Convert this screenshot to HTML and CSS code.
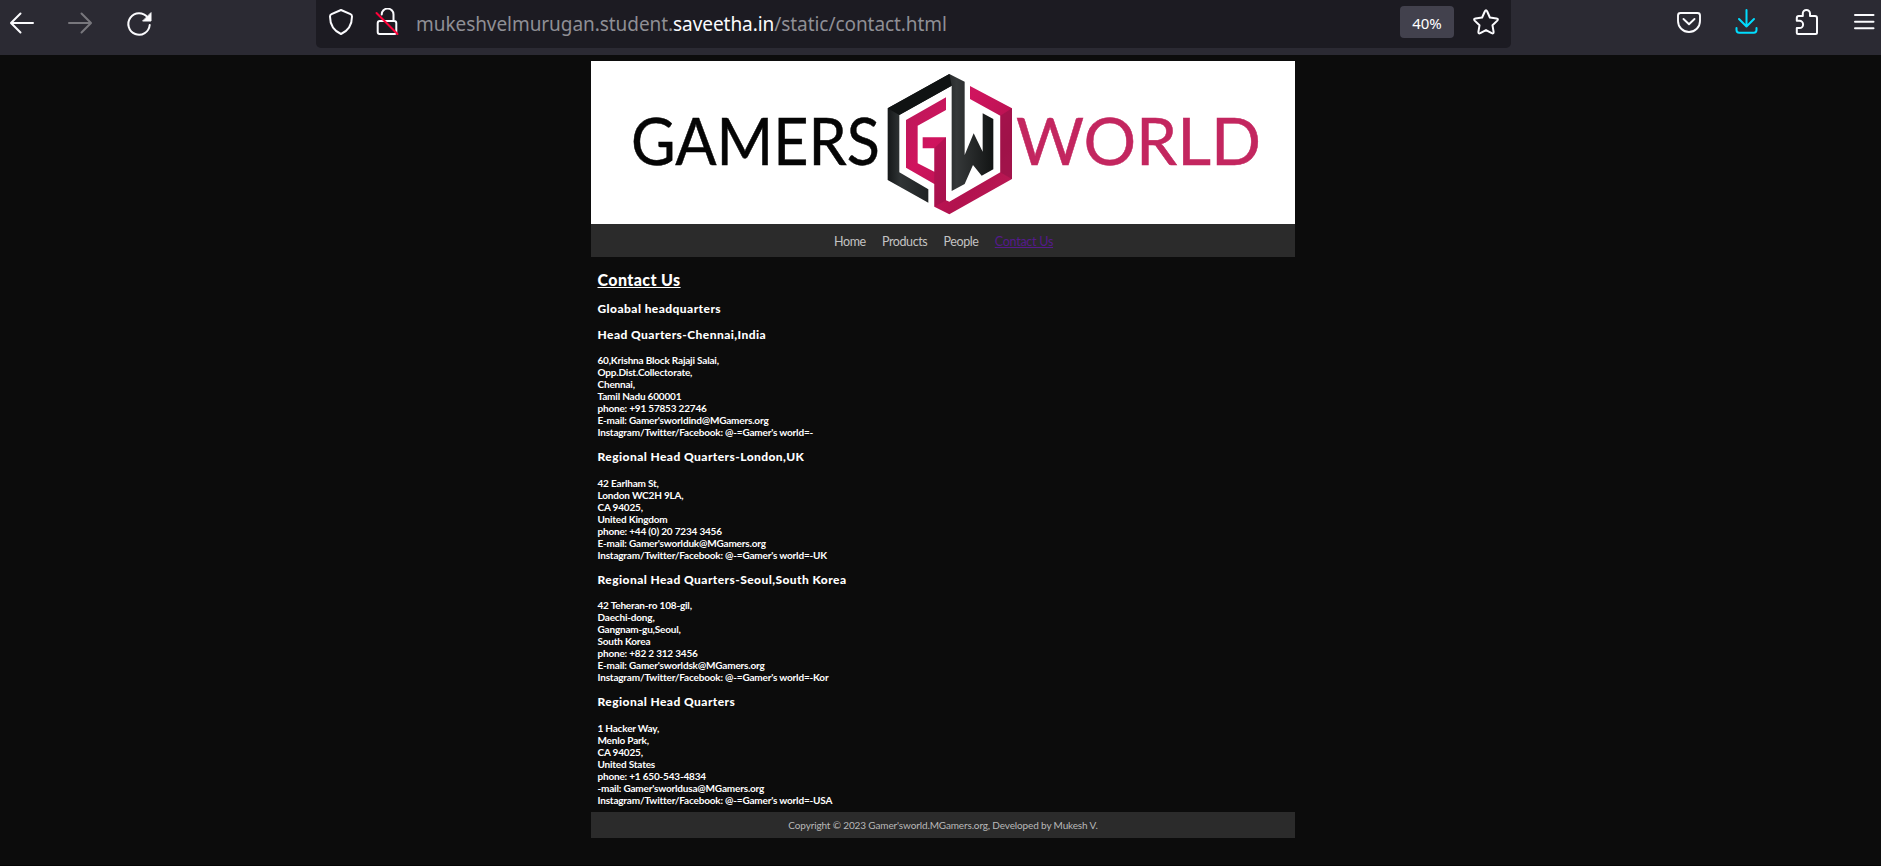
FILE: index.html
```html
<!DOCTYPE html>
<html lang="en">
<head>
<meta charset="utf-8">
<title>Contact Us</title>
<link rel="stylesheet" href="styles.css">
</head>
<body>
<header class="toolbar">
  <svg class="icon back" viewBox="7 8 30 30"><path d="M33 23H11.5M20.5 13.5L11 23l9.500 9.500"/></svg>
  <svg class="icon forward" viewBox="65 8 30 30"><path d="M69 23h21.500M81.500 13.500L91 23l-9.500 9.500"/></svg>
  <svg class="icon reload" viewBox="124 8 30 30"><path d="M147.500 17.500A10.700 10.700 0 1 0 149.700 25"/><path class="solid" d="M151 13v8h-8z"/></svg>
  <div class="urlbar">
    <svg class="icon shield" viewBox="326 8 30 30"><path d="M341 10l9.500 4.200q1.500.7 1.500 2.200c0 8-3.500 14-11 17.600-7.500-3.600-11-9.600-11-17.600q0-1.500 1.500-2.200z"/></svg>
    <svg class="icon lock" viewBox="372 8 30 30"><path d="M381.700 14.500a5.900 5.900 0 0 1 11.800 0V21M380 21h14q2.300 0 2.300 2.300V32q0 2-2 2h-14.600q-2 0-2-2v-8.700q0-2.300 2.300-2.300z"/><path class="slash" d="M376.500 13L397.500 34"/></svg>
    <div class="url"><span class="sub">mukeshvelmurugan.student.</span><span class="domain">saveetha.in</span><span class="path">/static/contact.html</span></div>
    <div class="zoom">40%</div>
    <svg class="icon star" viewBox="1471 8 30 30"><path d="M1484.800 11.500q1.200-2.300 2.400 0l2.700 6 6.600.9q2.300.5.800 2.200l-4.800 4.700 1.100 6.500q.1 2.300-1.900 1.400l-5.700-3.100-5.700 3.100q-2 .9-1.900-1.400l1.100-6.500-4.800-4.700q-1.500-1.700.8-2.200l6.600-.9z"/></svg>
  </div>
  <svg class="icon pocket" viewBox="1674 8 30 30"><path d="M1680.500 13h17q2.500 0 2.500 2.500V21a11 11 0 0 1-22 0v-5.500q0-2.500 2.500-2.500zM1683.500 19l5.500 5.300 5.500-5.300"/></svg>
  <svg class="icon download" viewBox="1731 8 30 30"><path d="M1746.500 10v16.500M1739 19l7.500 7.500 7.500-7.500M1736.500 28v2q0 2.700 2.700 2.700h14.600q2.700 0 2.700-2.700v-2"/></svg>
  <svg class="icon puzzle" viewBox="1792 8 30 30"><path d="M1798 34q-1.200 0-1.200-1.200V28h2.700a3.600 3.600 0 0 0 0-7.200h-2.700V18q0-2 2-2h4v-2.500a3.600 3.600 0 0 1 7.200 0V16h5q2 0 2 2v14.500q0 1.500-1.500 1.500z"/></svg>
  <svg class="icon menu" viewBox="1849 8 30 30"><path d="M1855 15h18.500M1855 21.700h18.500M1855 28.300h18.500"/></svg>
</header>

<main class="page">
  <svg class="banner" viewBox="591 61 704 163">
    <defs>
      <linearGradient id="ink" x1="0" y1="0" x2="1" y2="0"><stop offset="0" stop-color="#151819"/><stop offset=".12" stop-color="#303435"/><stop offset=".5" stop-color="#181b1c"/><stop offset=".65" stop-color="#353839"/><stop offset="1" stop-color="#121414"/></linearGradient>
      <linearGradient id="rose" x1="0" y1="0" x2="1" y2="1"><stop offset="0" stop-color="#b51a58"/><stop offset=".35" stop-color="#d0145e"/><stop offset=".7" stop-color="#b2124e"/><stop offset="1" stop-color="#bf1c58"/></linearGradient>
    </defs>
    <text class="brand" x="631" y="164.500" textLength="249" lengthAdjust="spacingAndGlyphs">GAMERS</text>
    <text class="brand brand-rose" x="1016" y="164.500" textLength="245" lengthAdjust="spacingAndGlyphs">WORLD</text>
    <g transform="translate(860 55) scale(.33333)">
      <path fill="url(#ink)" d="M268 57L83 160V375L205 443V403L118 352V180L275 92V408L314 387L339 330L365 362L400 343V192L368 175V290L341 235L314 300V80z"/>
      <path fill="url(#rose)" d="M258 127L138 195V338L223 387V455L268 478L456 372V160L330 93V132L421 182V352L268 440L258 436V247H188V280H223V350L173 325V212L258 165z"/>
      <path fill="#101313" d="M83 160L118 180L275 92L268 57z"/>
      <path fill="#8f1245" d="M421 182L456 160V372L421 352z" opacity=".55"/>
      <path fill="#8f1245" d="M223 280L258 247V436L223 455z" opacity=".4"/>
    </g>
  </svg>
  <nav class="nav"><a>Home</a><a>Products</a><a>People</a><a class="current">Contact Us</a></nav>

  <div class="content">
    <h1>Contact Us</h1>
    <h2 class="global">Gloabal headquarters</h2>
    <section>
      <h2>Head Quarters-Chennai,India</h2>
      <p>60,Krishna Block Rajaji Salai,<br>Opp.Dist.Collectorate,<br>Chennai,<br>Tamil Nadu 600001<br>phone: +91 57853 22746<br>E-mail: Gamer'sworldind@MGamers.org<br>Instagram/Twitter/Facebook: @-=Gamer's world=-</p>
    </section>
    <section>
      <h2>Regional Head Quarters-London,UK</h2>
      <p>42 Earlham St,<br>London WC2H 9LA,<br>CA 94025,<br>United Kingdom<br>phone: +44 (0) 20 7234 3456<br>E-mail: Gamer'sworlduk@MGamers.org<br>Instagram/Twitter/Facebook: @-=Gamer's world=-UK</p>
    </section>
    <section>
      <h2>Regional Head Quarters-Seoul,South Korea</h2>
      <p>42 Teheran-ro 108-gil,<br>Daechi-dong,<br>Gangnam-gu,Seoul,<br>South Korea<br>phone: +82 2 312 3456<br>E-mail: Gamer'sworldsk@MGamers.org<br>Instagram/Twitter/Facebook: @-=Gamer's world=-Kor</p>
    </section>
    <section>
      <h2>Regional Head Quarters</h2>
      <p>1 Hacker Way,<br>Menlo Park,<br>CA 94025,<br>United States<br>phone: +1 650-543-4834<br>-mail: Gamer'sworldusa@MGamers.org<br>Instagram/Twitter/Facebook: @-=Gamer's world=-USA</p>
    </section>
  </div>
  <footer class="footer">Copyright © 2023 Gamer'sworld.MGamers.org, Developed by Mukesh V.</footer>
</main>
</body>
</html>
```

FILE: styles.css
```css
* { box-sizing: border-box; }
body { margin: 0; height: 866px; overflow: hidden; background: #0c0c0c; color: #fff; font-family: Lato, sans-serif; border-bottom: 1px solid #050505; }

.toolbar { display: flex; height: 55px; background: #2b2a33; padding-left: 7px; }
.icon { flex: none; width: 30px; height: 30px; margin-top: 8px; fill: none; stroke: #fbfbfe; stroke-width: 2; stroke-linecap: round; stroke-linejoin: round; }
.solid { fill: #fbfbfe; stroke-width: 1; }
.forward { margin-left: 28px; stroke: #78777d; }
.reload { margin-left: 29px; }
.urlbar { display: flex; flex: none; width: 1195px; height: 48px; margin-left: 162px; padding-left: 10px; background: #1c1b22; border-radius: 0 0 5px 5px; }
.lock { margin-left: 16px; }
.slash { stroke: #ff0039; }
.url { display: flex; flex: none; width: 984px; margin-left: 14px; padding-top: 10px; font: 19px/28px "Noto Sans", sans-serif; letter-spacing: -.06px; color: #8f8f95; white-space: nowrap; }
.domain { color: #fbfbfe; }
.zoom { flex: none; width: 54px; height: 32px; margin-top: 6px; border-radius: 4px; background: #42414d; font: 15px/34px "Noto Sans", sans-serif; text-align: center; }
.star { margin-left: 17px; }
.pocket { margin-left: 163px; stroke-width: 1.900; }
.download { margin-left: 27px; stroke: #00ddff; }
.puzzle { margin-left: 31px; }
.menu { margin-left: 27px; }

.page { width: 704px; margin: 6px 0 0 591px; }
.banner { display: block; width: 704px; height: 163px; background: #fff; }
.brand { font: 65px Lato, sans-serif; fill: #050505; stroke: #050505; stroke-width: .5; }
.brand-rose { fill: #c3265f; stroke: #c3265f; }
.nav { display: flex; gap: 16.200px; height: 33px; padding-left: 243px; background: #2b2b2b; color: #c3c3c3; font-size: 12.500px; letter-spacing: -.4px; line-height: 36px; }
.current { color: #551a8b; letter-spacing: -.25px; text-decoration: underline; }

.content { height: 555px; padding: 14px 6.500px 0; }
h1, h2, p { margin: 0; white-space: nowrap; }
h1 { font-size: 16px; line-height: 18px; height: 28.700px; font-weight: 900; letter-spacing: .4px; text-decoration: underline; }
h2 { font-size: 12px; line-height: 18px; font-weight: 900; letter-spacing: .43px; height: 28.300px; }
.global { height: 26px; }
section { height: 122.600px; }
p { font-size: 10px; line-height: 12px; font-weight: 700; letter-spacing: -.19px; }
.footer { height: 26px; background: #2b2b2b; color: #b9b9b9; font-size: 10px; letter-spacing: -.14px; line-height: 27px; text-align: center; }
```
